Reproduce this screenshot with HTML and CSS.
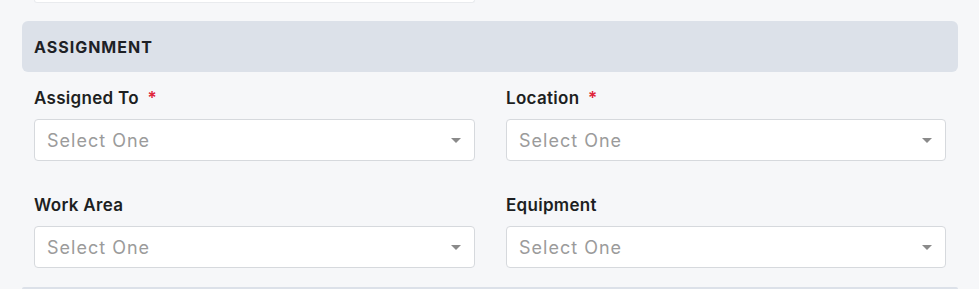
FILE: index.html
```html
<!DOCTYPE html>
<html lang="en">
<head>
    <meta charset="UTF-8">
    <meta name="viewport" content="width=device-width, initial-scale=1.0">
    <title>Assignment</title>
    <link rel="stylesheet" href="styles.css">
</head>
<body>

<div class="form-wrap">
    <div class="prev-field"><div class="prev-input"></div></div>

    <div class="section-header">Assignment</div>

    <div class="field-grid">
        <div class="field">
            <label class="field-label">Assigned To <span class="req">*</span></label>
            <div class="select-box">
                <span class="placeholder">Select One</span>
                <svg class="caret" width="10" height="5" viewBox="0 0 10 5"><path d="M0 0h10L5 5z" fill="#8a8a8a"/></svg>
            </div>
        </div>
        <div class="field">
            <label class="field-label">Location <span class="req">*</span></label>
            <div class="select-box">
                <span class="placeholder">Select One</span>
                <svg class="caret" width="10" height="5" viewBox="0 0 10 5"><path d="M0 0h10L5 5z" fill="#8a8a8a"/></svg>
            </div>
        </div>
        <div class="field">
            <label class="field-label">Work Area</label>
            <div class="select-box">
                <span class="placeholder">Select One</span>
                <svg class="caret" width="10" height="5" viewBox="0 0 10 5"><path d="M0 0h10L5 5z" fill="#8a8a8a"/></svg>
            </div>
        </div>
        <div class="field">
            <label class="field-label">Equipment</label>
            <div class="select-box">
                <span class="placeholder">Select One</span>
                <svg class="caret" width="10" height="5" viewBox="0 0 10 5"><path d="M0 0h10L5 5z" fill="#8a8a8a"/></svg>
            </div>
        </div>
    </div>

    <div class="section-header next"></div>
</div>

</body>
</html>
```

FILE: styles.css
```css
body {
    background-color: #f6f7f9;
    font-family: Inter, "Open Sans", sans-serif;
    color: #212529;
    margin: 0;
}

.form-wrap {
    width: 936px;
    margin-left: 22px;
    display: flex;
    flex-direction: column;
}

.prev-field {
    padding: 0 12px;
}

.prev-input {
    width: 439px;
    height: 2px;
    background-color: #fff;
    border: 1px solid #e9ebee;
    border-top: none;
    border-radius: 0 0 4px 4px;
}

.section-header {
    margin-top: 18px;
    height: 51px;
    padding: 0 12px;
    display: flex;
    align-items: center;
    background-color: #dce1e9;
    border-radius: 6px;
    font-size: 16px;
    font-weight: 700;
    text-transform: uppercase;
    color: #1e2126;
    letter-spacing: 1px;
}

/* only the top edge of the next section shows */
.section-header.next {
    margin-top: 19px;
    height: 2px;
    border-radius: 6px 6px 0 0;
}

.field-grid {
    display: grid;
    grid-template-columns: 441px 440px;
    column-gap: 31px;
    row-gap: 33px;
    padding: 15px 12px 0;
}

.field {
    display: flex;
    flex-direction: column;
    gap: 10px;
}

.field-label {
    font-size: 17px;
    line-height: 22px;
    font-weight: 600;
    color: #1d1f22;
    letter-spacing: 0.3px;
}

.req {
    color: #e0253b;
    margin-left: 4px;
}

.select-box {
    height: 40px;
    border: 1px solid #d6d9dd;
    border-radius: 4px;
    background-color: #fff;
    display: flex;
    align-items: center;
    justify-content: space-between;
    padding: 0 13px 0 12px;
}

.placeholder {
    font-size: 18px;
    color: #9b9b9b;
    letter-spacing: 1px;
}

.caret {
    display: block;
}
```
